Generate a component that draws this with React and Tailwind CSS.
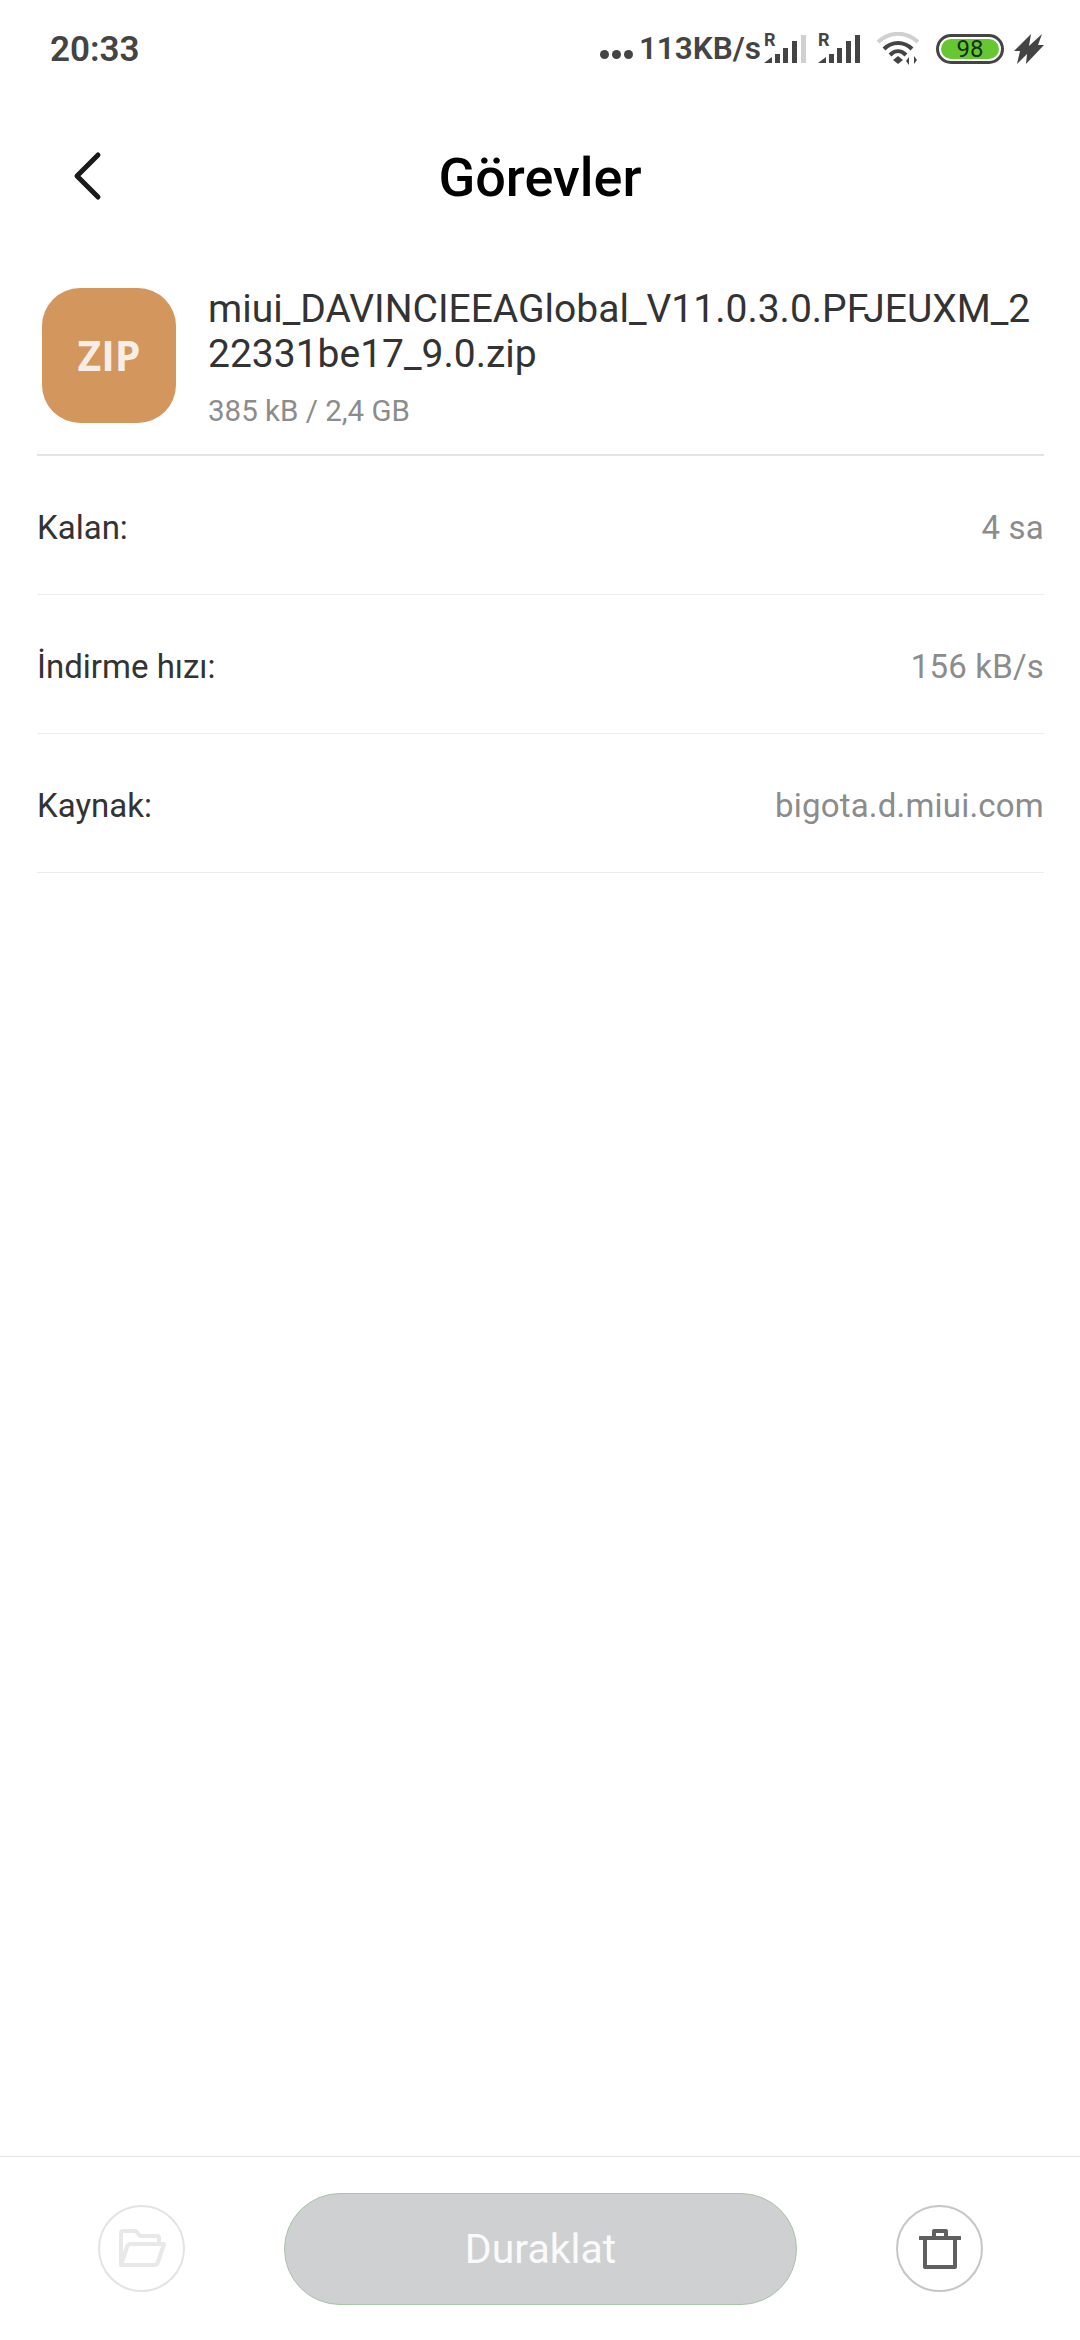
import React from "react";

const Signal = ({ lastBarLight }) => (
  <div className="relative w-[42px] h-[30px]">
    <span className="absolute left-0 top-[-3px] text-[18px] leading-[18px] font-bold text-[#444]">R</span>
    <svg className="absolute inset-0" width="42" height="30" viewBox="0 0 42 30" fill="#444">
      <path d="M0 29 L8 23 V29 Z" />
      <rect x="11" y="20" width="5" height="9" />
      <rect x="19" y="14" width="5" height="15" />
      <rect x="28" y="7" width="5" height="22" />
      <rect x="37" y="1" width="5" height="28" fill={lastBarLight ? "#d0d0d0" : "#444"} />
    </svg>
  </div>
);

const StatusBar = () => (
  <div className="flex items-center justify-between h-[74px] pt-[24px] pl-[50px] pr-[36px] text-[#444]">
    <span className="text-[35px] font-semibold leading-none">20:33</span>
    <div className="flex items-center">
      <div className="flex gap-[3px] mt-[10px] mr-[6px]">
        <span className="w-[9px] h-[9px] rounded-full bg-[#444]" />
        <span className="w-[9px] h-[9px] rounded-full bg-[#444]" />
        <span className="w-[9px] h-[9px] rounded-full bg-[#444]" />
      </div>
      <span className="text-[31.5px] font-semibold leading-none mr-[3px]">113KB/s</span>
      <Signal lastBarLight />
      <div className="w-[12px]" />
      <Signal />
      <svg className="ml-[16px]" width="44" height="34" viewBox="0 0 44 34" fill="none">
        <path d="M2 10 C14 -1 30 -1 42 10" stroke="#d0d0d0" strokeWidth="4" />
        <path d="M8 17 C16 9 28 9 36 17" stroke="#444" strokeWidth="4" />
        <path d="M14 23 C19 18 25 18 30 23" stroke="#444" strokeWidth="4" />
        <path d="M17 28 L22 24 L27 28 L22 32 Z" fill="#444" />
        <path d="M33 33 V25 L30 29 Z M38 24 V32 L41 28 Z" fill="#444" />
      </svg>
      <div className="ml-[16px] w-[68px] h-[30px] rounded-full border-[3px] border-[#444] p-[2px]">
        <div className="h-full rounded-full bg-[#66c733] flex items-center justify-center">
          <span className="text-[24px] leading-none text-[#143008]">98</span>
        </div>
      </div>
      <svg className="ml-[10px]" width="30" height="30" viewBox="0 0 30 30" fill="#444">
        <path d="M17 0 L0 17 H6 L3 30 L13 20 L12 30 L30 11 H24 L28 0 L15 12 Z" />
      </svg>
    </div>
  </div>
);

const InfoRow = ({ label, value }) => (
  <div className="flex items-center justify-between h-[139px] pt-[5px] border-b border-[#ececec]">
    <span className="text-[33px] text-[#333]">{label}</span>
    <span className="text-[33px] tracking-[0.2px] text-[#8c8c8c]">{value}</span>
  </div>
);

const CircleButton = ({ className, children }) => (
  <div className={`w-[87px] h-[87px] rounded-full border-2 flex items-center justify-center ${className}`}>
    {children}
  </div>
);

export default function App() {
  return (
    <div className="w-[1080px] h-[2340px] bg-white flex flex-col font-['Roboto',sans-serif]">
      <StatusBar />

      <div className="relative flex items-center justify-center h-[110px] mt-[49px]">
        <svg className="absolute left-[72px] top-[28px]" width="31" height="52" viewBox="0 0 31 52" fill="none">
          <path d="M26 4 L5 25 L26 46" stroke="#1a1a1a" strokeWidth="5" strokeLinecap="round" strokeLinejoin="round" />
        </svg>
        <h1 className="text-[54px] font-medium text-black leading-none">Görevler</h1>
      </div>

      <div className="pl-[37px] pr-[36px] mt-[57px]">
        <div className="flex h-[166px] border-b-2 border-[#e3e3e3]">
          <div className="w-[134px] h-[135px] ml-[5px] mt-[-2px] rounded-[38px] bg-[#d3965c] flex items-center justify-center shrink-0">
            <span className="text-[41px] font-bold text-[#f6eee6] font-['Open_Sans',sans-serif]">ZIP</span>
          </div>
          <div className="ml-[32px] min-w-0">
            <div className="text-[39px] leading-[45px] text-[#333] break-all w-[830px] mt-[-3px]">
              miui_DAVINCIEEAGlobal_V11.0.3.0.PFJEUXM_222331be17_9.0.zip
            </div>
            <div className="text-[29.5px] leading-[34px] text-[#8c8c8c] mt-[17px]">385 kB / 2,4 GB</div>
          </div>
        </div>
        <InfoRow label="Kalan:" value="4 sa" />
        <InfoRow label="İndirme hızı:" value="156 kB/s" />
        <InfoRow label="Kaynak:" value="bigota.d.miui.com" />
      </div>

      <div className="mt-auto h-[184px] border-t border-[#e6e6e6] flex items-center pl-[98px] pr-[97px]">
        <CircleButton className="border-[#e3e3e3]">
          <svg width="50" height="40" viewBox="0 0 50 40" fill="none" stroke="#e8e8e8" strokeWidth="4" strokeLinejoin="round">
            <path d="M4 36 V4 Q4 2 6 2 H19 L23 7 H40 Q42 7 42 9 V14" />
            <path d="M4 36 L10 18 Q11 15 14 15 H47 L41 33 Q40 36 37 36 Z" />
          </svg>
        </CircleButton>
        <div className="ml-[99px] mr-auto w-[513px] h-[112px] rounded-full bg-[#cfd0d1] border border-[#a9c4a6] flex items-center justify-center pt-[2px]">
          <span className="text-[41px] text-[#fafafa]">Duraklat</span>
        </div>
        <CircleButton className="border-[#c6c6c6]">
          <svg width="42" height="42" viewBox="0 0 42 42" fill="none" stroke="#606060" strokeWidth="4">
            <path d="M1 10 H41" strokeLinecap="round" />
            <path d="M15 9 V3 H27 V9" strokeLinejoin="round" />
            <path d="M6 10 V39 H36 V10" strokeLinejoin="round" />
          </svg>
        </CircleButton>
      </div>
    </div>
  );
}
